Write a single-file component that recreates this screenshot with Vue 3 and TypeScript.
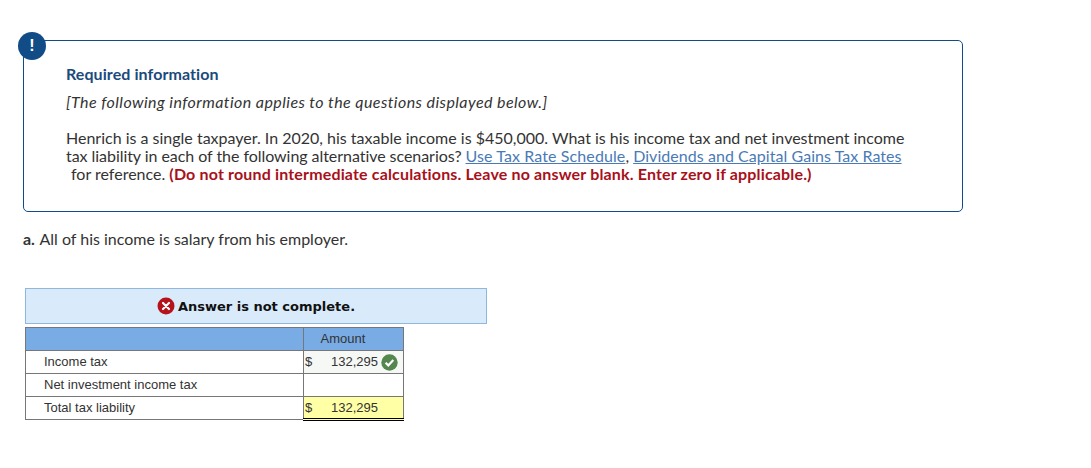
<script setup lang="ts">
interface Row { label: string; symbol: string; value: string; kind: 'ok' | 'empty' | 'total' }
const rows: Row[] = [
  { label: 'Income tax', symbol: '$', value: '132,295', kind: 'ok' },
  { label: 'Net investment income tax', symbol: '', value: '', kind: 'empty' },
  { label: 'Total tax liability', symbol: '$', value: '132,295', kind: 'total' },
]
</script>

<template>
  <main class="page">
    <section class="info">
      <span class="badge">!</span>
      <h2 class="title">Required information</h2>
      <p class="note">[The following information applies to the questions displayed below.]</p>
      <p class="body">
        Henrich is a single taxpayer. In 2020, his taxable income is $450,000. What is his income tax and net investment income<br />
        <span class="lead">tax liability in each of the following alternative scenarios? </span><a class="link first">Use Tax Rate Schedule</a>, <a class="link second">Dividends and Capital Gains Tax Rates</a><br />
        <span class="indent">for reference. </span><strong class="warn">(Do not round intermediate calculations. Leave no answer blank. Enter zero if applicable.)</strong>
      </p>
    </section>

    <p class="question"><strong class="marker">a.</strong> All of his income is salary from his employer.</p>

    <div class="banner">
      <svg class="x" width="18" height="18" viewBox="0 0 18 18">
        <circle cx="9" cy="9" r="8.5" fill="#b5121b" />
        <path d="M6 6l6 6M12 6l-6 6" stroke="#fff" stroke-width="2.2" stroke-linecap="round" />
      </svg>
      <span>Answer is not complete.</span>
    </div>

    <table class="grid">
      <thead>
        <tr><th class="lab"></th><th class="amt"><span class="head">Amount</span></th></tr>
      </thead>
      <tbody>
        <tr v-for="r in rows" :key="r.label">
          <td class="lab">{{ r.label }}</td>
          <td class="amt" :class="r.kind">
            <div class="cell">
              <span>{{ r.symbol }}</span>
              <span class="val">{{ r.value }}</span>
              <svg v-if="r.kind === 'ok'" class="check" width="17" height="17" viewBox="0 0 17 17">
                <circle cx="8.5" cy="8.5" r="8.2" fill="#56864f" />
                <path d="M4.6 8.8l2.7 2.6 5-5.4" fill="none" stroke="#fff" stroke-width="2.2" />
              </svg>
            </div>
          </td>
        </tr>
      </tbody>
    </table>
  </main>
</template>

<style>
html, body { margin: 0; background: #fff; }
</style>

<style scoped>
.page {
  width: 1091px;
  height: 468px;
  box-sizing: border-box;
  padding: 40px 0 0 23px;
  font-family: Lato, "Liberation Sans", sans-serif;
  color: #333;
  overflow: hidden;
}
.info {
  position: relative;
  width: 940px;
  height: 172px;
  box-sizing: border-box;
  border: 1px solid #124c87;
  border-radius: 5px;
  padding: 24px 42px 0;
}
.badge {
  position: absolute;
  left: -6px;
  top: -9px;
  width: 28px;
  height: 28px;
  border-radius: 50%;
  background: #124c87;
  color: #fff;
  font: 700 16px/28px "Liberation Sans", sans-serif;
  text-align: center;
}
.title {
  margin: 0;
  font-size: 16px;
  line-height: 18px;
  font-weight: 700;
  color: #1b4a7c;
  letter-spacing: 0.08px;
}
.note {
  margin: 10px 0 0;
  font-size: 16px;
  line-height: 18px;
  font-style: italic;
  letter-spacing: 0.43px;
}
.body {
  margin: 18px 0 0;
  font-size: 16px;
  line-height: 18px;
  white-space: nowrap;
}
.lead { letter-spacing: -0.05px; }
.link { color: #4a7ab5; text-decoration: underline; }
.first { letter-spacing: 0.1px; }
.second { letter-spacing: 0.05px; }
.indent { margin-left: 5px; }
.warn { color: #a8101a; font-weight: 700; letter-spacing: 0.16px; }
.question {
  margin: 18px 0 0;
  font-size: 16px;
  line-height: 18px;
}
.marker { margin-right: 1px; }
.banner {
  width: 462px;
  height: 36px;
  margin: 40px 0 0 2px;
  box-sizing: border-box;
  border: 1px solid #8fb8de;
  background: #d9ebfa;
  display: flex;
  align-items: center;
  justify-content: center;
  gap: 3px;
  font: 700 13px "DejaVu Sans", sans-serif;
  color: #111;
}
.grid {
  margin: 3px 0 0 2px;
  border-collapse: collapse;
  font: 13px "Liberation Sans", Arial, sans-serif;
  color: #333;
  table-layout: fixed;
  width: 378px;
}
.grid th, .grid td {
  border: 1px solid #777;
  height: 20px;
  padding: 0 0 2px;
}
.grid th { background: #79ace4; font-weight: 400; }
.grid .lab { width: 259px; padding-left: 18px; text-align: left; }
.grid .amt { width: 99px; }
.head { margin-right: 21px; }
.cell { display: flex; align-items: center; padding-left: 1px; height: 20px; position: relative; }
.val { position: absolute; right: 25px; }
.check { position: absolute; right: 5px; top: 3px; }
.ok { background: #f6f8f5; }
.grid .total { background: #ffffa6; border-top: 1px solid #000; border-bottom: 3px double #000; padding-bottom: 1px; height: 20px; }
.grid tr:last-child .lab { height: 20px; padding-bottom: 1px; }
.total .cell { height: 20px; }
</style>
